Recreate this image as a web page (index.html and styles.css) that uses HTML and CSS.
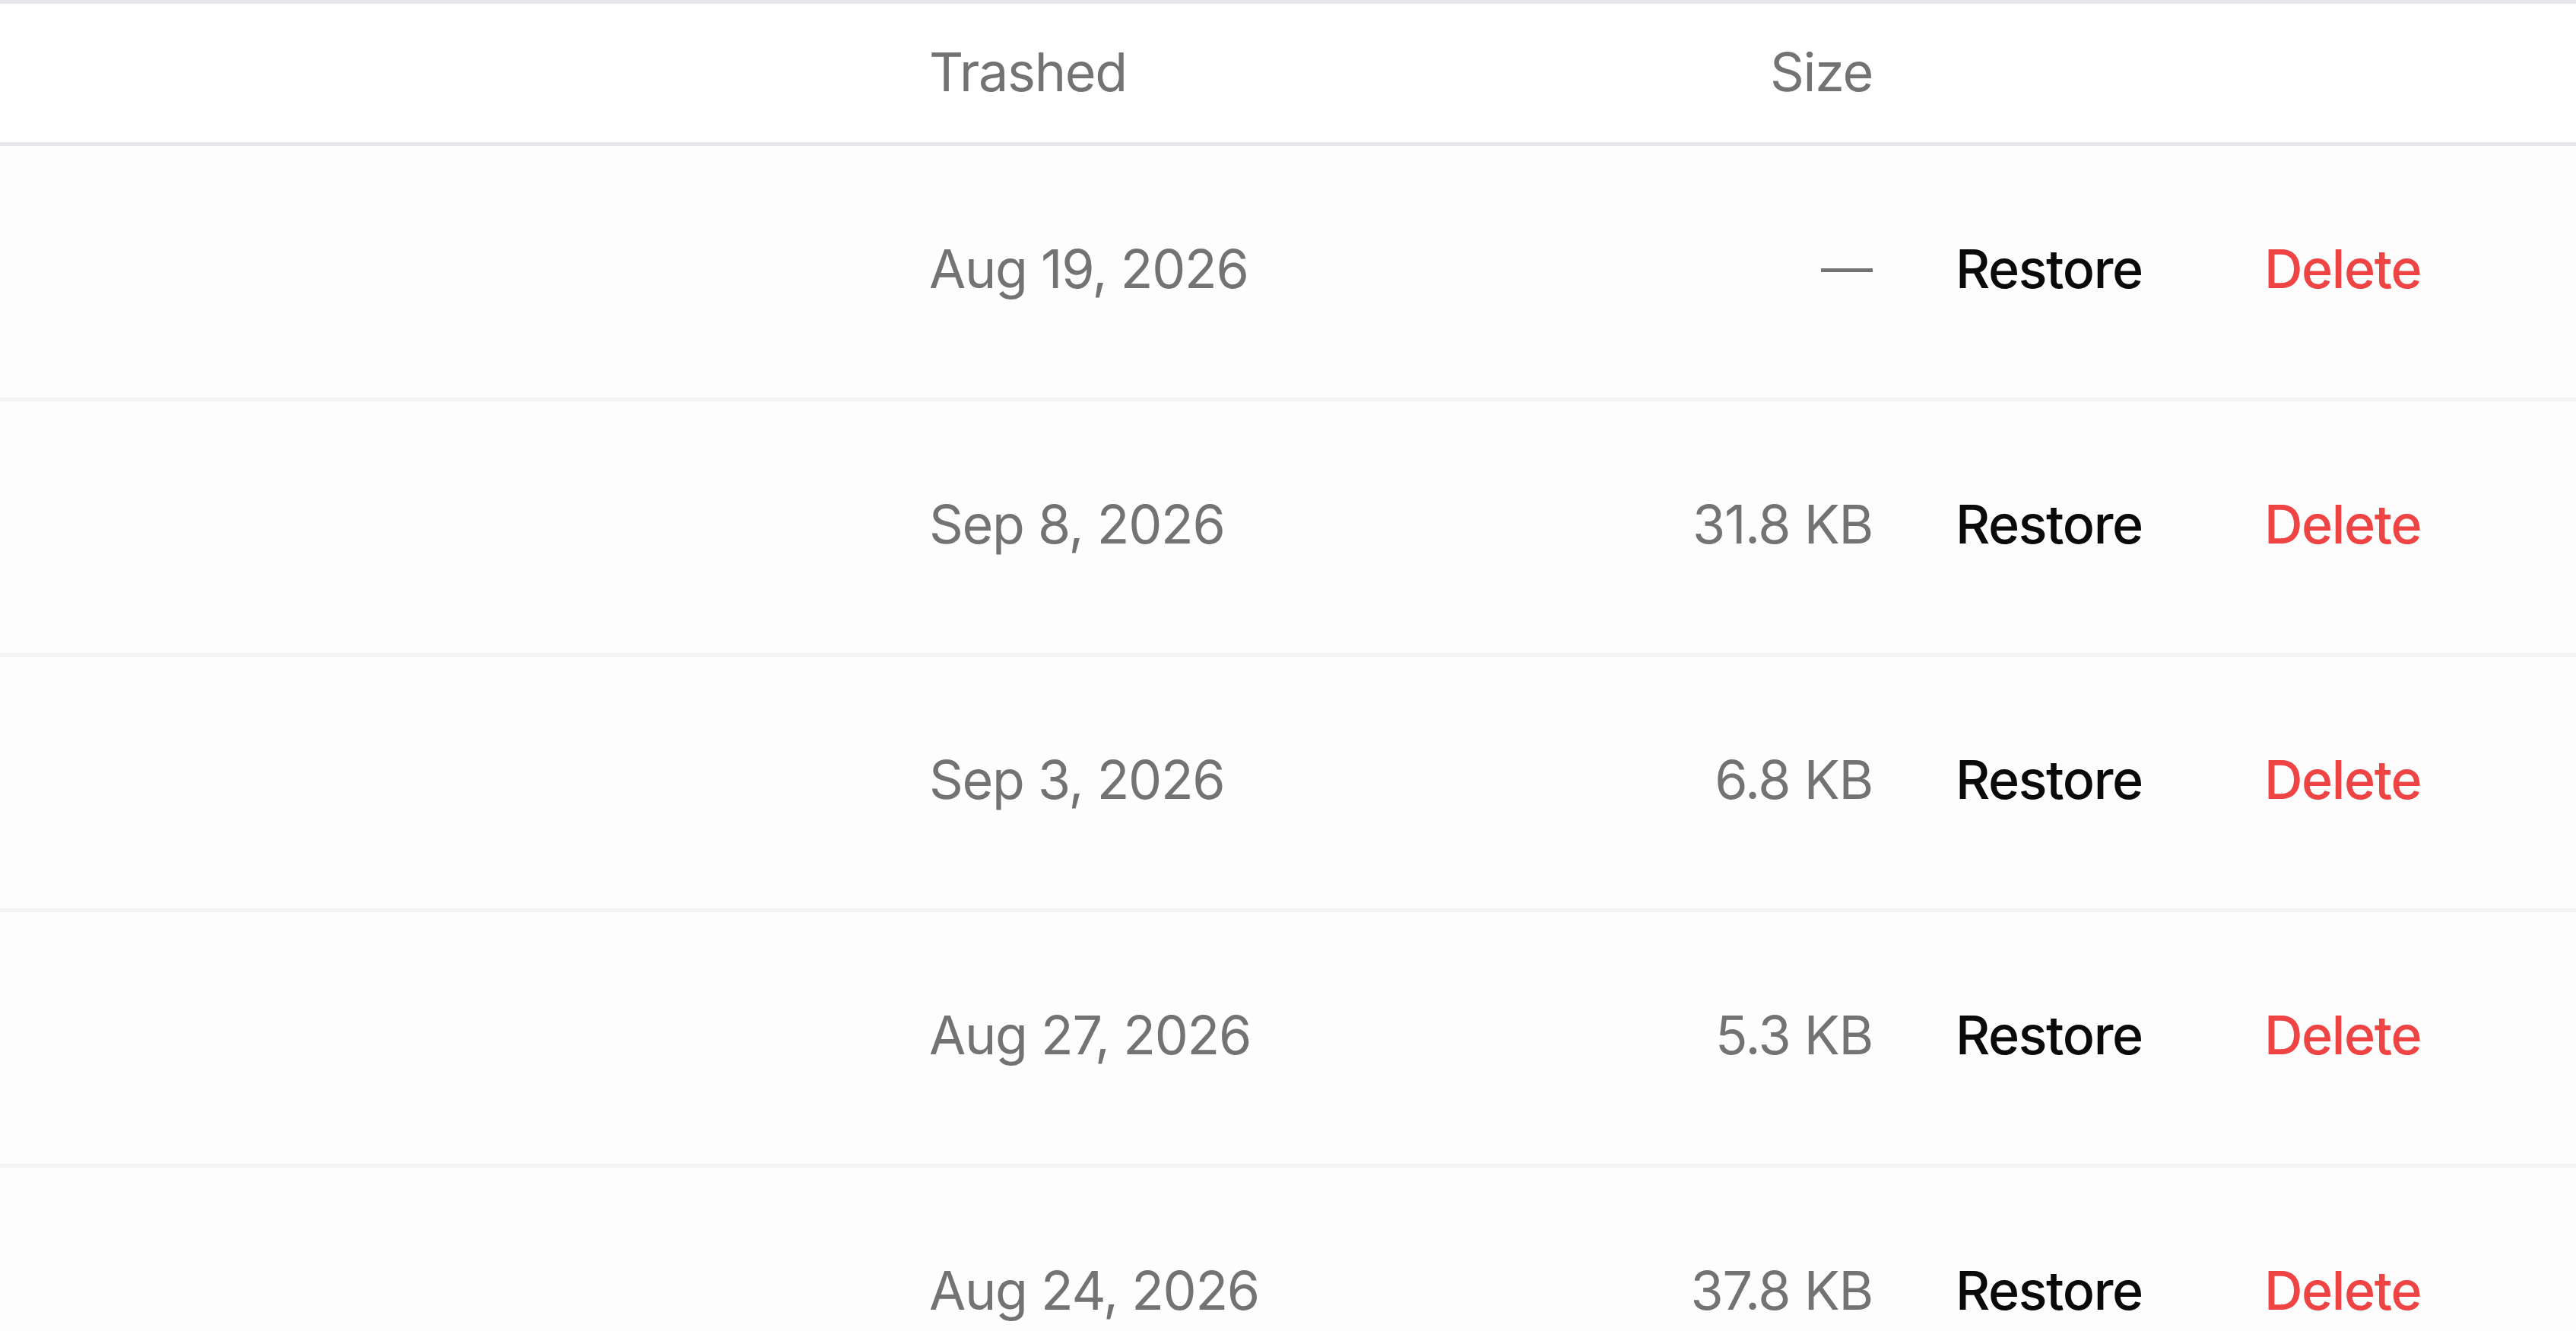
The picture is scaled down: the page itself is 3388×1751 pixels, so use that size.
FILE: index.html
```html
<!DOCTYPE html>
<html lang="en">
<head>
    <meta charset="UTF-8">
    <meta name="viewport" content="width=device-width, initial-scale=1.0">
    <title>Trash</title>
    <link rel="stylesheet" href="styles.css">
</head>
<body>

<div class="trash-table">
    <div class="trash-row trash-head">
        <div class="cell cell-name"></div>
        <div class="cell cell-date">Trashed</div>
        <div class="cell cell-size">Size</div>
        <div class="cell cell-restore"></div>
        <div class="cell cell-delete"></div>
    </div>

    <div class="trash-row">
        <div class="cell cell-name"></div>
        <div class="cell cell-date">Aug 19, 2026</div>
        <div class="cell cell-size"><span class="dash"></span></div>
        <div class="cell cell-restore"><button class="link restore">Restore</button></div>
        <div class="cell cell-delete"><button class="link delete">Delete</button></div>
    </div>

    <div class="trash-row">
        <div class="cell cell-name"></div>
        <div class="cell cell-date">Sep 8, 2026</div>
        <div class="cell cell-size">31.8 KB</div>
        <div class="cell cell-restore"><button class="link restore">Restore</button></div>
        <div class="cell cell-delete"><button class="link delete">Delete</button></div>
    </div>

    <div class="trash-row">
        <div class="cell cell-name"></div>
        <div class="cell cell-date">Sep 3, 2026</div>
        <div class="cell cell-size">6.8 KB</div>
        <div class="cell cell-restore"><button class="link restore">Restore</button></div>
        <div class="cell cell-delete"><button class="link delete">Delete</button></div>
    </div>

    <div class="trash-row">
        <div class="cell cell-name"></div>
        <div class="cell cell-date">Aug 27, 2026</div>
        <div class="cell cell-size">5.3 KB</div>
        <div class="cell cell-restore"><button class="link restore">Restore</button></div>
        <div class="cell cell-delete"><button class="link delete">Delete</button></div>
    </div>

    <div class="trash-row">
        <div class="cell cell-name"></div>
        <div class="cell cell-date">Aug 24, 2026</div>
        <div class="cell cell-size">37.8 KB</div>
        <div class="cell cell-restore"><button class="link restore">Restore</button></div>
        <div class="cell cell-delete"><button class="link delete">Delete</button></div>
    </div>
</div>

</body>
</html>
```

FILE: styles.css
```css
body {
    font-family: 'Inter', 'Liberation Sans', sans-serif;
    background-color: #fdfdfd;
    margin: 0;
    padding: 0;
    color: #737373;
    overflow: hidden;
}

.trash-table {
    border-top: 5px solid #e5e7eb;
}

.trash-row {
    display: grid;
    grid-template-columns: 1222px 1fr 400px 515px 410px;
    align-items: center;
    height: 336px;
    padding-bottom: 8px;
    box-sizing: border-box;
    border-bottom: 5px solid #f3f4f6;
    font-size: 70px;
    letter-spacing: -1.3px;
}

.trash-head {
    height: 187px;
    padding-bottom: 4px;
    background-color: #fff;
    border-bottom-color: #e5e7eb;
}

.cell-size {
    text-align: right;
}

.dash {
    display: inline-block;
    width: 68px;
    height: 5px;
    background-color: #737373;
    vertical-align: middle;
    margin-bottom: 8px;
}

.cell-restore {
    padding-left: 109px;
}

/* Row actions */
.link {
    font-family: inherit;
    font-size: 70px;
    font-weight: 500;
    letter-spacing: -1.4px;
    background: none;
    border: none;
    padding: 0;
    cursor: pointer;
}

.restore {
    color: #0a0a0a;
}

.delete {
    color: #ef4444;
}
```
